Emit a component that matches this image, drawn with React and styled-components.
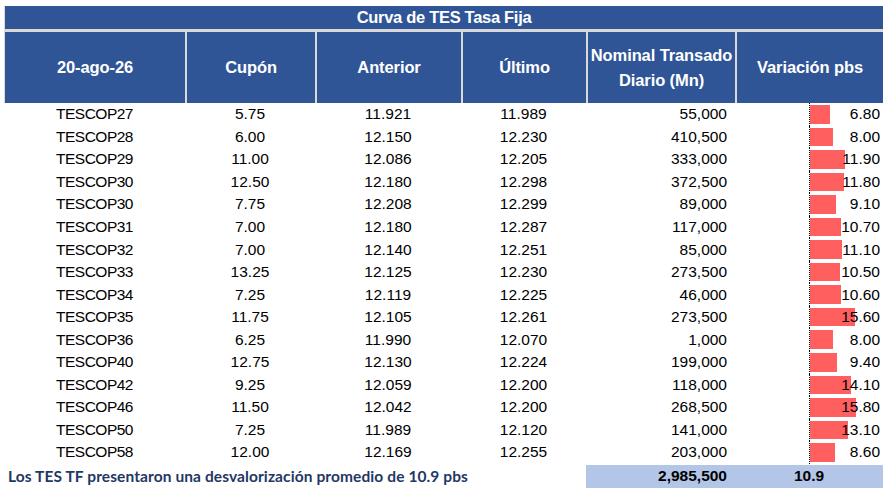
import styled, { createGlobalStyle } from 'styled-components';

const rows = [
  { id: 'TESCOP27', cupon: '5.75', anterior: '11.921', ultimo: '11.989', nominal: '55,000', pbs: 6.8 },
  { id: 'TESCOP28', cupon: '6.00', anterior: '12.150', ultimo: '12.230', nominal: '410,500', pbs: 8.0 },
  { id: 'TESCOP29', cupon: '11.00', anterior: '12.086', ultimo: '12.205', nominal: '333,000', pbs: 11.9 },
  { id: 'TESCOP30', cupon: '12.50', anterior: '12.180', ultimo: '12.298', nominal: '372,500', pbs: 11.8 },
  { id: 'TESCOP30', cupon: '7.75', anterior: '12.208', ultimo: '12.299', nominal: '89,000', pbs: 9.1 },
  { id: 'TESCOP31', cupon: '7.00', anterior: '12.180', ultimo: '12.287', nominal: '117,000', pbs: 10.7 },
  { id: 'TESCOP32', cupon: '7.00', anterior: '12.140', ultimo: '12.251', nominal: '85,000', pbs: 11.1 },
  { id: 'TESCOP33', cupon: '13.25', anterior: '12.125', ultimo: '12.230', nominal: '273,500', pbs: 10.5 },
  { id: 'TESCOP34', cupon: '7.25', anterior: '12.119', ultimo: '12.225', nominal: '46,000', pbs: 10.6 },
  { id: 'TESCOP35', cupon: '11.75', anterior: '12.105', ultimo: '12.261', nominal: '273,500', pbs: 15.6 },
  { id: 'TESCOP36', cupon: '6.25', anterior: '11.990', ultimo: '12.070', nominal: '1,000', pbs: 8.0 },
  { id: 'TESCOP40', cupon: '12.75', anterior: '12.130', ultimo: '12.224', nominal: '199,000', pbs: 9.4 },
  { id: 'TESCOP42', cupon: '9.25', anterior: '12.059', ultimo: '12.200', nominal: '118,000', pbs: 14.1 },
  { id: 'TESCOP46', cupon: '11.50', anterior: '12.042', ultimo: '12.200', nominal: '268,500', pbs: 15.8 },
  { id: 'TESCOP50', cupon: '7.25', anterior: '11.989', ultimo: '12.120', nominal: '141,000', pbs: 13.1 },
  { id: 'TESCOP58', cupon: '12.00', anterior: '12.169', ultimo: '12.255', nominal: '203,000', pbs: 8.6 },
];

// px por punto básico en la barra
const BAR_SCALE = 2.9;
const COLS = '181px 130px 146px 125px 149px 148px';

const App = () => {
  return (
    <>
      <GlobalStyle />
      <Page>
        <Table>
          <Title>Curva de TES Tasa Fija</Title>
          <HeaderRow>
            <HeadCell>20-ago-26</HeadCell>
            <HeadCell>Cupón</HeadCell>
            <HeadCell>Anterior</HeadCell>
            <HeadCell>Último</HeadCell>
            <HeadCell>Nominal Transado<br />Diario (Mn)</HeadCell>
            <HeadCell>Variación pbs</HeadCell>
          </HeaderRow>

          <Body>
            {rows.map((r, i) => (
              <Row key={i}>
                <Cell $tight>{r.id}</Cell>
                <Cell>{r.cupon}</Cell>
                <Cell>{r.anterior}</Cell>
                <Cell>{r.ultimo}</Cell>
                <Cell $align="right">{r.nominal}</Cell>
                <VarCell>
                  <BarTrack>
                    <Bar style={{ width: `${r.pbs * BAR_SCALE}px` }} />
                  </BarTrack>
                  <VarValue>{r.pbs.toFixed(2)}</VarValue>
                </VarCell>
              </Row>
            ))}
          </Body>

          <FooterRow>
            <Note>Los TES TF presentaron una desvalorización promedio de 10.9 pbs</Note>
            <TotalCell $align="right">2,985,500</TotalCell>
            <TotalCell>10.9</TotalCell>
          </FooterRow>
        </Table>
      </Page>
    </>
  );
};

export default App;

/* ============== styles ============== */

const GlobalStyle = createGlobalStyle`
  html, body {
    margin: 0;
    padding: 0;
    background: #fff;
  }
  body {
    font-family: "Liberation Sans", Arial, sans-serif;
    color: #000;
  }
`;

const Page = styled.div`
  width: 886px;
  height: 490px;
  padding: 6px 0 0 4px;
  box-sizing: border-box;
`;

const Table = styled.div`
  width: 879px;
  display: flex;
  flex-direction: column;
`;

const Title = styled.div`
  height: 23px;
  background: #2f5597;
  color: #fff;
  border-left: 1px solid #d9d9d9;
  font-size: 16.5px;
  font-weight: 700;
  letter-spacing: -0.3px;
  display: flex;
  align-items: center;
  justify-content: center;
  border-bottom: 3px solid #d9d9d9;
`;

const HeaderRow = styled.div`
  display: grid;
  grid-template-columns: ${COLS};
  height: 71px;
`;

const HeadCell = styled.div`
  background: #2f5597;
  border-left: 2px solid #d9d9d9;
  color: #fff;
  font-size: 16.5px;
  font-weight: 700;
  letter-spacing: -0.1px;
  line-height: 25px;
  text-align: center;
  display: flex;
  align-items: center;
  justify-content: center;

  &:first-child {
    border-left-width: 1px;
  }
`;

const Body = styled.div`
  display: flex;
  flex-direction: column;
`;

const Row = styled.div`
  display: grid;
  grid-template-columns: ${COLS};
  height: 22.56px;
  font-size: 15.5px;
`;

const Cell = styled.div`
  display: flex;
  align-items: center;
  justify-content: ${({ $align }) => ($align === 'right' ? 'flex-end' : 'center')};
  padding-right: ${({ $align }) => ($align === 'right' ? '8px' : '0')};
  letter-spacing: ${({ $tight }) => ($tight ? '-0.5px' : '0')};
`;

const VarCell = styled.div`
  display: grid;
  align-items: center;
`;

const BarTrack = styled.div`
  grid-area: 1 / 1;
  align-self: stretch;
  margin-left: 74px;
  border-left: 1px dotted #000;
  display: flex;
  align-items: center;
`;

const Bar = styled.div`
  height: 18.5px;
  background: #ff5f5f;
`;

const VarValue = styled.span`
  grid-area: 1 / 1;
  justify-self: end;
  padding-right: 3px;
  position: relative;
`;

const FooterRow = styled.div`
  display: grid;
  grid-template-columns: ${COLS};
  height: 23px;
  margin-top: 1px;
`;

const Note = styled.div`
  grid-column: 1 / 5;
  display: flex;
  align-items: center;
  padding-left: 4px;
  font-family: Lato, "Open Sans", sans-serif;
  font-weight: 700;
  font-size: 15.5px;
  letter-spacing: 0.1px;
  color: #1f3864;
  white-space: nowrap;
`;

const TotalCell = styled.div`
  background: #b4c6e7;
  font-size: 15.5px;
  font-weight: 700;
  display: flex;
  align-items: center;
  justify-content: ${({ $align }) => ($align === 'right' ? 'flex-end' : 'center')};
  padding-right: ${({ $align }) => ($align === 'right' ? '8px' : '0')};
`;
